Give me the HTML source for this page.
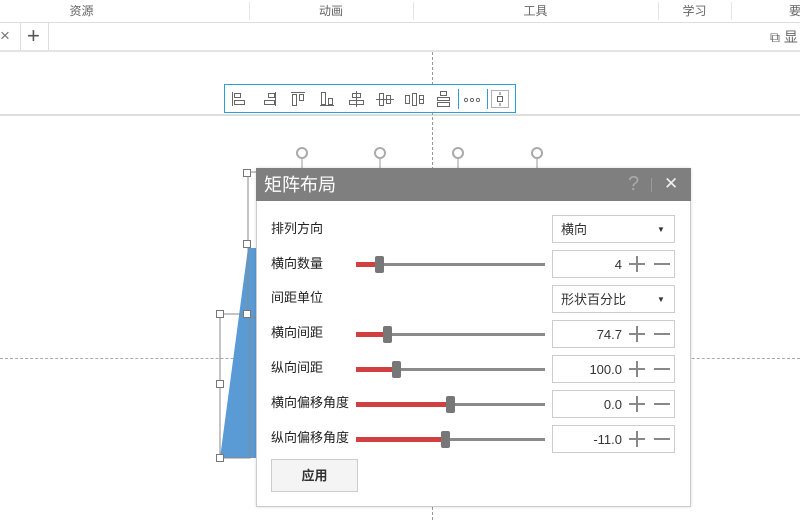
<!DOCTYPE html>
<html><head><meta charset="utf-8"><style>
body{margin:0;width:800px;height:520px;overflow:hidden;background:#fff;font-family:"Liberation Sans","Noto Sans CJK SC",sans-serif;position:relative;color:#333}
.a{position:absolute}
.tab{position:absolute;top:0;height:22px;line-height:22px;font-size:12px;color:#666;text-align:center}
.lbl{position:absolute;left:271px;font-size:13px;line-height:16px;color:#222}
.trk{position:absolute;left:356px;width:189px;height:3px;background:#8a8a8a}
.red{position:absolute;left:0;top:-1px;height:5px;background:#d04040}
.th{position:absolute;top:-7px;width:9px;height:17px;background:#777;border-radius:2px}
.box{position:absolute;left:552px;width:121px;height:26px;border:1px solid #ccc;background:#fff;font-size:13px;line-height:16px}
.p{position:absolute;left:76px;top:12px;width:16px;height:2px;background:#888}
.p2{position:absolute;left:83px;top:5px;width:2px;height:16px;background:#888}
.m{position:absolute;left:101px;top:12px;width:16px;height:2px;background:#888}
.h{position:absolute;width:6px;height:6px;border:1px solid #777;background:#fff}
</style></head><body>
<div class="a" style="left:0;top:0;width:800px;height:22px;background:#fff;border-bottom:1px solid #ddd"></div>
<div class="tab" style="left:0;width:163px">资源</div>
<div class="tab" style="left:249px;width:164px">动画</div>
<div class="tab" style="left:413px;width:245px">工具</div>
<div class="tab" style="left:658px;width:73px">学习</div>
<div class="tab" style="left:785px;width:20px">要</div>
<div class="a" style="left:249px;top:2px;width:1px;height:18px;background:#e6e6e6"></div>
<div class="a" style="left:413px;top:2px;width:1px;height:18px;background:#e6e6e6"></div>
<div class="a" style="left:658px;top:2px;width:1px;height:18px;background:#e6e6e6"></div>
<div class="a" style="left:731px;top:2px;width:1px;height:18px;background:#e6e6e6"></div>
<div class="a" style="left:0;top:23px;width:800px;height:27px;border-bottom:2px solid #e4e4e4"></div>
<div class="a" style="left:0;top:26px;font-size:17px;line-height:20px;color:#777">×</div>
<div class="a" style="left:20px;top:23px;width:1px;height:27px;background:#ddd"></div>
<div class="a" style="left:27px;top:25px;font-size:22px;line-height:22px;color:#555">+</div>
<div class="a" style="left:48px;top:23px;width:1px;height:27px;background:#ddd"></div>
<div class="a" style="left:770px;top:28px;font-size:14px;line-height:18px;color:#666">⧉ 显</div>
<div class="a" style="left:0;top:114px;width:800px;height:2px;background:#ddd"></div>
<div class="a" style="left:432px;top:52px;height:468px;border-left:1px dashed #999"></div>
<div class="a" style="left:0;top:358px;width:800px;border-top:1px dashed #aaa"></div>
<div class="a" style="left:224px;top:84px;width:292px;height:29px;border:1px solid #2a9fd6;background:#fff;box-sizing:border-box"></div>
<svg class="a" style="left:224px;top:84px" width="293" height="30" fill="none" stroke="#666" stroke-width="1">
<line x1="8.5" y1="8" x2="8.5" y2="22"/><rect x="10.5" y="9.5" width="6" height="4"/><rect x="10.5" y="16.5" width="10" height="4"/>
<line x1="51.5" y1="8" x2="51.5" y2="22"/><rect x="44.5" y="9.5" width="6" height="4"/><rect x="40.5" y="16.5" width="10" height="4"/>
<line x1="67" y1="8.5" x2="81" y2="8.5"/><rect x="68.5" y="10.5" width="4" height="11"/><rect x="75.5" y="10.5" width="4" height="6"/>
<line x1="96" y1="21.5" x2="110" y2="21.5"/><rect x="97.5" y="8.5" width="4" height="12"/><rect x="104.5" y="14.5" width="4" height="6"/>
<line x1="132.5" y1="7" x2="132.5" y2="23"/><rect x="128.5" y="9.5" width="8" height="4"/><rect x="125.5" y="16.5" width="14" height="4"/>
<line x1="152" y1="15.5" x2="170" y2="15.5"/><rect x="155.5" y="9.5" width="4" height="12"/><rect x="162.5" y="11.5" width="4" height="8"/>
<rect x="181.5" y="11.5" width="4" height="8"/><rect x="188.5" y="9.5" width="4" height="12"/><line x1="195" y1="15.5" x2="200" y2="15.5"/><rect x="195.5" y="11.5" width="4" height="8"/>
<rect x="216.5" y="7.5" width="6" height="4"/><rect x="213.5" y="13.5" width="12" height="3"/><rect x="213.5" y="18.5" width="12" height="4"/>
<line x1="234.5" y1="5" x2="234.5" y2="25" stroke="#2a9fd6"/>
<circle cx="242" cy="16" r="1.6"/><circle cx="248" cy="16" r="1.6"/><circle cx="254" cy="16" r="1.6"/>
<line x1="263.5" y1="5" x2="263.5" y2="25" stroke="#2a9fd6"/>
<rect x="267.5" y="6.5" width="17" height="17" stroke-dasharray="1 1"/><rect x="273.5" y="12.5" width="5" height="5"/><line x1="276" y1="8" x2="276" y2="11"/><line x1="276" y1="19" x2="276" y2="22"/>
</svg>
<svg class="a" style="left:210px;top:140px" width="350" height="330">
<polygon points="10,318 38,108 46,108 46,318" fill="#5b9bd5"/>
<rect x="38" y="32" width="30" height="145" fill="none" stroke="#888"/>
<rect x="10" y="174" width="30" height="144" fill="none" stroke="#888"/>
<g fill="none" stroke="#aaa" stroke-width="2"><circle cx="92" cy="13" r="5"/><circle cx="170" cy="13" r="5"/><circle cx="248" cy="13" r="5"/><circle cx="327" cy="13" r="5"/></g>
<g stroke="#999"><line x1="92" y1="19" x2="92" y2="28"/><line x1="170" y1="19" x2="170" y2="28"/><line x1="248" y1="19" x2="248" y2="28"/><line x1="327" y1="19" x2="327" y2="28"/></g>
</svg>
<div class="h" style="left:243px;top:169px"></div><div class="h" style="left:243px;top:240px"></div><div class="h" style="left:243px;top:310px"></div>
<div class="h" style="left:216px;top:310px"></div><div class="h" style="left:216px;top:380px"></div><div class="h" style="left:216px;top:454px"></div>
<div class="a" style="left:256px;top:168px;width:433px;height:337px;background:#fff;border:1px solid #ccc;box-shadow:0 0 3px rgba(0,0,0,.15)"></div>
<div class="a" style="left:256px;top:168px;width:435px;height:33px;background:#7f7f7f"></div>
<div class="a" style="left:264px;top:174px;font-size:18px;line-height:22px;color:#fff">矩阵布局</div>
<div class="a" style="left:628px;top:173px;font-size:20px;line-height:22px;color:#aaa">?</div>
<div class="a" style="left:651px;top:178px;width:1px;height:14px;background:#999"></div>
<div class="a" style="left:664px;top:174px;font-size:17px;line-height:20px;color:#eee">✕</div>

<div class="lbl" style="top:221px">排列方向</div>
<div class="box" style="top:215px"><span class="a" style="left:8px;top:6px">横向</span><span class="a" style="left:104px;top:6px;font-size:8px">▼</span></div>
<div class="lbl" style="top:256px">横向数量</div>
<div class="trk" style="top:263px"><div class="red" style="width:20px"></div><div class="th" style="left:19px"></div></div>
<div class="box" style="top:250px"><span class="a" style="right:52px;top:6px">4</span><i class="p"></i><i class="p2"></i><i class="m"></i></div>
<div class="lbl" style="top:290px">间距单位</div>
<div class="box" style="top:285px"><span class="a" style="left:8px;top:6px">形状百分比</span><span class="a" style="left:104px;top:6px;font-size:8px">▼</span></div>
<div class="lbl" style="top:325px">横向间距</div>
<div class="trk" style="top:333px"><div class="red" style="width:28px"></div><div class="th" style="left:27px"></div></div>
<div class="box" style="top:320px"><span class="a" style="right:52px;top:6px">74.7</span><i class="p"></i><i class="p2"></i><i class="m"></i></div>
<div class="lbl" style="top:360px">纵向间距</div>
<div class="trk" style="top:368px"><div class="red" style="width:37px"></div><div class="th" style="left:36px"></div></div>
<div class="box" style="top:355px"><span class="a" style="right:52px;top:6px">100.0</span><i class="p"></i><i class="p2"></i><i class="m"></i></div>
<div class="lbl" style="top:395px">横向偏移角度</div>
<div class="trk" style="top:403px"><div class="red" style="width:90px"></div><div class="th" style="left:90px"></div></div>
<div class="box" style="top:390px"><span class="a" style="right:52px;top:6px">0.0</span><i class="p"></i><i class="p2"></i><i class="m"></i></div>
<div class="lbl" style="top:430px">纵向偏移角度</div>
<div class="trk" style="top:438px"><div class="red" style="width:85px"></div><div class="th" style="left:85px"></div></div>
<div class="box" style="top:425px"><span class="a" style="right:52px;top:6px">-11.0</span><i class="p"></i><i class="p2"></i><i class="m"></i></div>
<div class="a" style="left:271px;top:459px;width:85px;height:31px;background:#f4f4f4;border:1px solid #ccc;text-align:center;line-height:31px;font-size:13px;font-weight:bold">应用</div>
</body></html>
